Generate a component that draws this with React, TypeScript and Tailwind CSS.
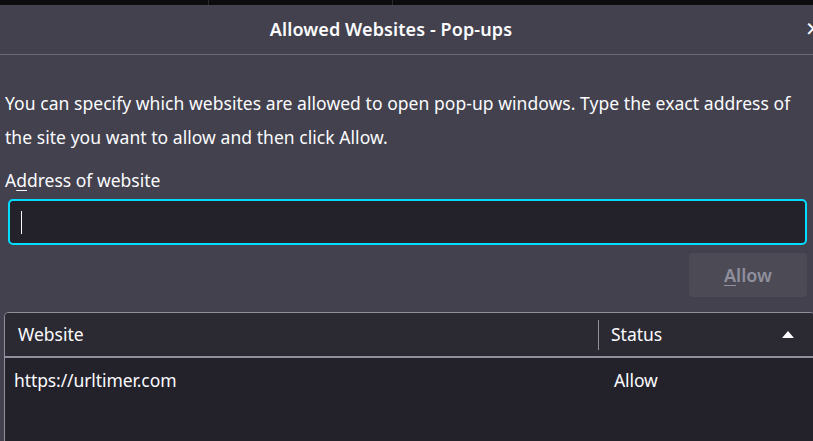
import React from 'react';

const font = { fontFamily: '"Noto Sans", "Open Sans", sans-serif' };

export default function App() {
  return (
    <div className="w-[813px] h-[441px] overflow-hidden bg-[#42414d] text-[#fbfbfe] flex flex-col" style={font}>
      {/* browser strip behind the dialog */}
      <div className="h-[5px] bg-[#0c0c0f] shrink-0 flex">
        <div className="w-[208px]" />
        <div className="w-[185px] border-x border-[#2b2a33]" />
      </div>

      {/* title bar */}
      <div className="h-[50px] shrink-0 relative flex items-center justify-center border-b border-[#6b6a74]">
        <span className="text-[18px] font-semibold tracking-[0.1px] -mt-[1px] -ml-[31px]">Allowed Websites - Pop-ups</span>
        <span className="absolute right-[-9px] top-[14px] text-[20px] leading-none text-[#fbfbfe]">✕</span>
      </div>

      <div className="flex flex-col px-[5px] pt-[31px]">
        <p className="text-[17.5px] leading-[34px] tracking-[0.05px]">
          You can specify which websites are allowed to open pop-up windows. Type the exact address of the site you want to allow and then click Allow.
        </p>

        <label className="text-[17.5px] leading-[24px] mt-[14px]">
          A<span className="underline underline-offset-[3px]">d</span>dress of website
        </label>

        <div className="mt-[7px] ml-[3px] mr-[1px] h-[46px] rounded-[5px] border-2 border-[#00ddff] bg-[#23222b] flex items-center pl-[11px]">
          <div className="w-[1px] h-[23px] bg-[#fbfbfe]" />
        </div>

        <div className="flex justify-end mr-[1px] mt-[8px]">
          <button className="w-[118px] h-[44px] rounded-[4px] bg-[#4b4a55] text-[#8f8f9d] text-[18px] font-semibold">
            <span className="underline underline-offset-[3px]">A</span>llow
          </button>
        </div>
      </div>

      <div className="mt-[15px] ml-[4px] -mr-[2px] flex-1 rounded-t-[5px] border border-[#8f8f9d] border-b-0 bg-[#23222b] flex flex-col overflow-hidden">
        <div className="h-[45px] shrink-0 flex items-center bg-[#2b2a33] border-b-2 border-[#8f8f9d] text-[17.5px]">
          <div className="w-[593px] pl-[13px]">Website</div>
          <div className="w-px h-[30px] bg-[#8f8f9d]" />
          <div className="flex-1 flex items-center justify-between pl-[12px] pr-[20px]">
            <span>Status</span>
            <svg width="12" height="7" viewBox="0 0 12 7"><path d="M0 7 L6 0 L12 7 Z" fill="#fbfbfe" /></svg>
          </div>
        </div>
        <div className="flex items-center h-[44px] text-[17.5px] tracking-[-0.1px]">
          <div className="w-[594px] pl-[9px]">https://urltimer.com</div>
          <div className="pl-[15px]">Allow</div>
        </div>
      </div>
    </div>
  );
}
